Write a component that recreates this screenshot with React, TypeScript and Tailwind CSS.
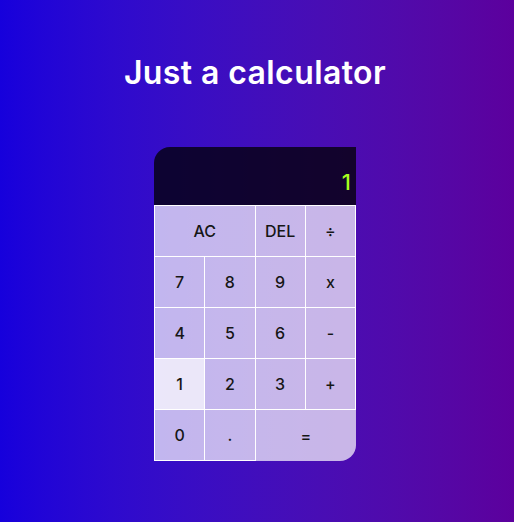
import React from "react";

const btn =
  "flex items-center justify-center border-r border-b border-white text-[16px] font-medium text-[#161616] bg-white/70";

export default function App() {
  const font = { fontFamily: "Inter, 'DejaVu Sans', sans-serif" };
  return (
    <div
      className="w-[514px] h-[522px] flex flex-col items-center pr-[4px] bg-gradient-to-r from-[#1600dc] to-[#5c009d]"
      style={font}
    >
      <h1 className="mt-[55px] text-[32px] leading-[36px] font-semibold text-white tracking-[0.4px]">
        Just a calculator
      </h1>
      <div className="mt-[56px] w-[202px] rounded-tl-[16px] rounded-br-[16px] overflow-hidden">
        <div className="h-[58px] bg-black/75 flex items-end justify-end pr-[5px] pb-[12px]">
          <span className="text-[#a8ff1e] text-[22px] font-medium leading-none">1</span>
        </div>
        <div className="grid grid-cols-4 grid-rows-[repeat(5,51px)] border-l border-t border-white">
          <button className={btn + " col-span-2"}>AC</button>
          <button className={btn}>DEL</button>
          <button className={btn}>÷</button>
          <button className={btn}>7</button>
          <button className={btn}>8</button>
          <button className={btn}>9</button>
          <button className={btn}>x</button>
          <button className={btn}>4</button>
          <button className={btn}>5</button>
          <button className={btn}>6</button>
          <button className={btn}>-</button>
          <button className={btn.replace("bg-white/70", "bg-white/90")}>1</button>
          <button className={btn}>2</button>
          <button className={btn}>3</button>
          <button className={btn}>+</button>
          <button className={btn}>0</button>
          <button className={btn}>.</button>
          <button className={btn + " col-span-2 border-b-0 border-r-0"}>=</button>
        </div>
      </div>
    </div>
  );
}
